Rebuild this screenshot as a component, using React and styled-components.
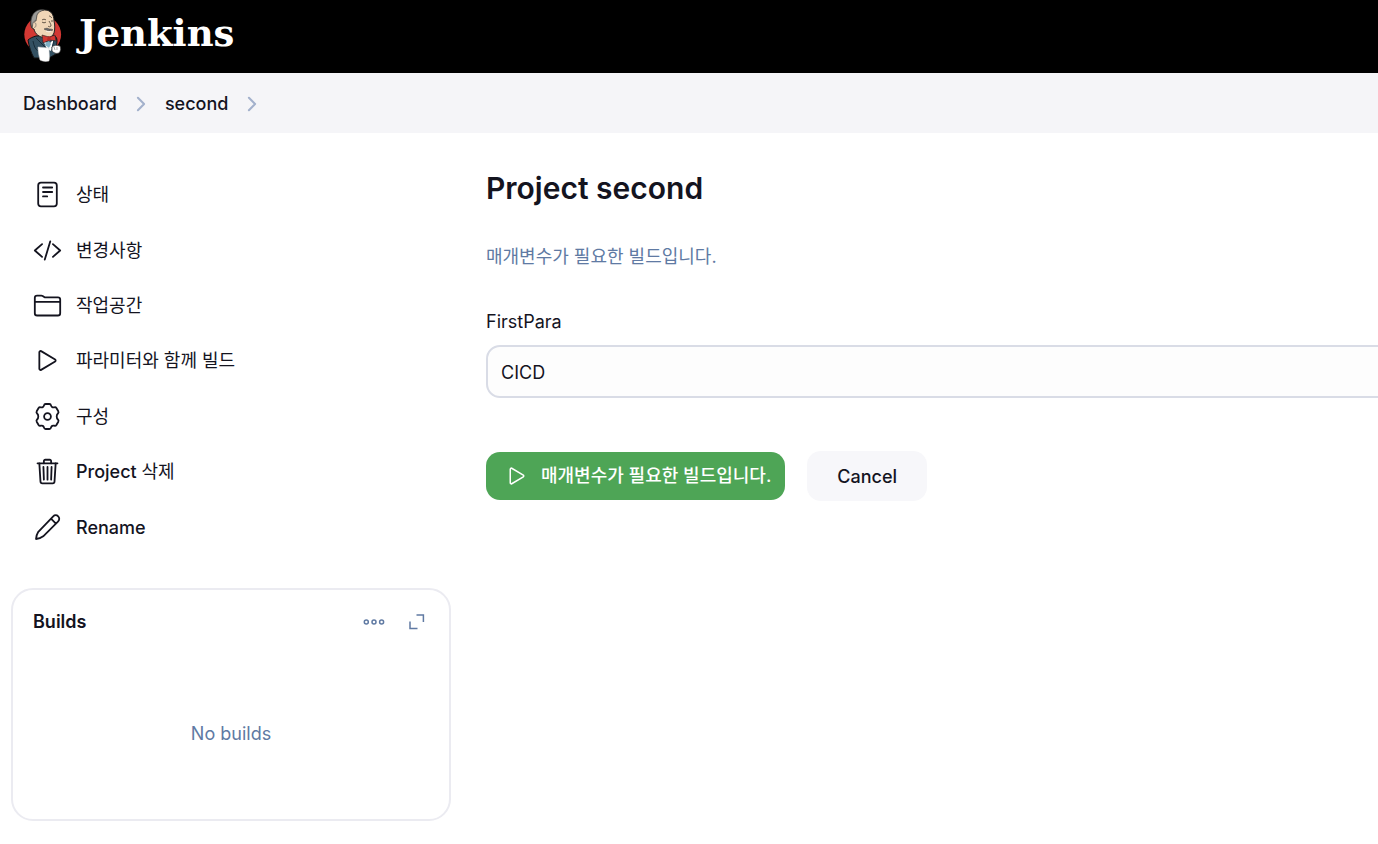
import styled, { createGlobalStyle } from "styled-components";
import {
  IoChevronForwardOutline,
  IoCodeSlashOutline,
  IoFolderOutline,
  IoPlayOutline,
  IoTrashOutline,
} from "react-icons/io5";

const GlobalStyle = createGlobalStyle`
  * {
    box-sizing: border-box;
  }

  body {
    margin: 0;
    overflow-x: hidden;
    background: #fff;
    color: #14141f;
    font-family: Inter, "Noto Sans CJK KR", sans-serif;
    font-size: 18px;
    line-height: 24px;
  }

  a {
    color: inherit;
    text-decoration: none;
  }

  button, input {
    font: inherit;
    color: inherit;
  }
`;

const Header = styled.header`
  display: flex;
  align-items: center;
  height: 73px;
  padding: 0 15px 2px;
  background: #000;
`;

const Brand = styled.a`
  display: flex;
  align-items: center;
  gap: 4px;
  color: #fff;
`;

const BrandName = styled.span`
  padding-bottom: 6px;
  font-family: "DejaVu Serif", serif;
  font-size: 37px;
  font-weight: bold;
  line-height: 60px;
`;

const Breadcrumbs = styled.nav`
  display: flex;
  align-items: center;
  gap: 13px;
  height: 60px;
  padding: 1px 23px 0;
  background: #f5f5f8;
  font-weight: 500;

  svg {
    color: #a3b1cc;
  }
`;

const Page = styled.div`
  display: grid;
  grid-template-columns: 440px minmax(0, 1fr);
  gap: 35px;
  padding: 34px 0 20px 11px;
`;

const Tasks = styled.nav`
  display: grid;
  grid-auto-rows: 1fr;
  min-height: 388px;
  margin-bottom: 33px;
  padding-left: 22px;
`;

const Task = styled.a`
  display: flex;
  align-items: center;
  gap: 14px;
  font-weight: ${({ $latin }) => ($latin ? 500 : 400)};
`;

const TaskLabel = styled.span`
  padding-top: 1px;
`;

const Hangul = styled.span`
  font-weight: 400;
`;

const Card = styled.section`
  display: flex;
  flex-direction: column;
  min-height: 233px;
  border: 2px solid #ebebf1;
  border-radius: 22px;
`;

const CardHeader = styled.div`
  display: flex;
  align-items: center;
  gap: 24px;
  padding: 20px 24px 18px 20px;
`;

const CardTitle = styled.h2`
  flex-grow: 1;
  margin: 0;
  font-size: 18px;
  font-weight: 600;
  line-height: 24px;
`;

const IconButton = styled.button`
  display: flex;
  padding: 0;
  border: 0;
  background: none;
  color: #607aa3;
`;

const Empty = styled.p`
  display: flex;
  flex-grow: 1;
  align-items: center;
  justify-content: center;
  margin: 0;
  padding-bottom: 4px;
  color: #607aa3;
`;

const Title = styled.h1`
  margin: 0;
  font-size: 30px;
  font-weight: 600;
  line-height: 42px;
`;

const Description = styled.p`
  margin: 36px 0 0;
  color: #607aa3;
`;

const Label = styled.label`
  display: block;
  margin: 41px 0 11px;
`;

/* The field runs past the right edge of the window */
const Field = styled.div`
  margin-right: -24px;
`;

const Input = styled.input`
  display: block;
  width: 100%;
  height: 53px;
  padding: 2px 13px 0;
  border: 2px solid #d9dce6;
  border-radius: 14px;
  background: #fdfdfd;
`;

const Actions = styled.div`
  display: flex;
  align-items: center;
  gap: 22px;
  margin-top: 53px;
`;

const Button = styled.button`
  height: 50px;
  padding: 2px 30px 0;
  border: 0;
  border-radius: 14px;
  background: #f7f7fa;
  font-weight: 500;
`;

const BuildButton = styled(Button)`
  display: flex;
  align-items: center;
  gap: 12px;
  height: 48px;
  padding: 0 14px 0 19px;
  background: #4ea556;
  color: #fff;
`;

function JenkinsLogo() {
  return (
    <svg width="60" height="66" viewBox="0 0 60 66" aria-hidden="true">
      <ellipse cx="27.7" cy="31.5" rx="18.4" ry="18.4" fill="#d33833" />
      <path d="M13 37c2-2 5-3 8-4l17-1c3 1 4 3 4 6l-1 13-7 4H19c-3-5-5-12-6-18z" fill="#335061" stroke="#111" strokeWidth="1" />
      <path d="M18 12c2-4 7-6 12-5 6 0 9 5 9 11 1 4 1 8 0 12-2 4-5 6-9 5-6-1-10-4-11-9-2 0-3-2-3-5 0-4 0-7 2-9z" fill="#f0d6b7" stroke="#222" strokeWidth="1" />
      <path d="M17 25c-2-5-1-11 2-15 3-3 6-4 10-3-3 1-6 2-7 5 0 2-1 4-1 6-2 0-3 1-3 3z" fill="#9b9b98" stroke="#333" strokeWidth=".7" />
      <path d="M18 20c2-1 3 0 3 2s-1 3-2 2" fill="#f0d6b7" stroke="#555" strokeWidth=".6" />
      <path d="M27 17c1-1 3-1 4 0M34 13c1 0 2 1 3 2M34 18c1 2 2 3 2 5-1 1-2 1-3 0M27 19c1 1 3 1 4 0M36 18h2" fill="none" stroke="#40362c" strokeWidth=".8" />
      <path d="M29 26c2-1 4-1 5 0 2 0 3 0 4 1-2 1-6 1-9-1z" fill="#6d6b6d" stroke="#333" strokeWidth=".5" />
      <path d="M31 28c2 1 4 1 5 0" stroke="#fff" strokeWidth=".7" fill="none" />
      <path d="M27 35l6 7 6-6-3 12-4-2z" fill="#fff" />
      <path d="M31 39l3-1 2 3-2 4-4-3z" fill="#81b0c4" />
      <path d="M27 32l7 2 6-2 1 6-6-1-7 3z" fill="#d33833" stroke="#222" strokeWidth=".6" />
      <path d="M33 33l3 1-1 4-3-1z" fill="#b62b28" />
      <path d="M18 38c1 5 2 8 5 10M21 35l10 10M39 37l-2 8" stroke="#172b38" strokeWidth="1" fill="none" />
      <path d="M23 44l11 1c0 5 1 9 0 13-4 1-7 0-9-1-1-4-2-8-2-13z" fill="#fff" stroke="#ccc" strokeWidth=".5" />
      <path d="M37 44c2-2 5-2 8-1 1 2 1 5-1 7-3 1-5 0-7-2z" fill="#fff" stroke="#333" strokeWidth=".7" />
      <path d="M39 44l1 3M42 44v3" stroke="#888" strokeWidth=".7" />
    </svg>
  );
}

function StatusIcon() {
  return (
    <svg width="29" height="29" viewBox="0 0 29 29" fill="none" stroke="currentColor" strokeWidth="1.8" strokeLinecap="round">
      <rect x="5.2" y="2.6" width="18.6" height="23.8" rx="2.8" />
      <path d="M10 7.5h9.2M10 12h9.2M10 16.4h4.2" />
    </svg>
  );
}

function GearIcon() {
  return (
    <svg width="29" height="29" viewBox="0 0 29 29" fill="none" stroke="currentColor" strokeWidth="1.8" strokeLinejoin="round">
      <circle cx="14.5" cy="14.5" r="3.4" />
      <path d="M12.6 2h3.8C17.3 2 17.8 2.500 18 3.400C18.300 4.900 19.800 5.800 21.300 5.300C22.100 5 22.900 5.200 23.400 6L25.300 9.300C25.700 10.100 25.600 10.900 24.900 11.500C23.300 12.900 23.300 16.100 24.900 17.500C25.600 18.100 25.700 18.900 25.300 19.700L23.400 23C22.900 23.800 22.100 24 21.300 23.700C19.800 23.200 18.300 24.100 18 25.600C17.800 26.500 17.300 27 16.400 27H12.600C11.700 27 11.200 26.500 11 25.600C10.700 24.100 9.200 23.200 7.700 23.700C6.900 24 6.100 23.800 5.600 23L3.700 19.700C3.300 18.900 3.400 18.100 4.100 17.500C5.700 16.100 5.700 12.900 4.100 11.500C3.400 10.900 3.300 10.100 3.700 9.300L5.600 6C6.100 5.200 6.900 5 7.700 5.300C9.200 5.800 10.700 4.900 11 3.400C11.200 2.500 11.700 2 12.600 2z" />
    </svg>
  );
}

function PencilIcon() {
  return (
    <svg width="29" height="29" viewBox="0 0 29 29" fill="none" stroke="currentColor" strokeWidth="1.8" strokeLinecap="round" strokeLinejoin="round">
      <path d="M3 26c.2-2.6.9-5 2.3-7.2L20.2 3.300a3.500 3.500 0 0 1 5 5L10.200 23.300C8 25 5.600 25.800 3 26zM18 5.700l4.900 4.900" />
    </svg>
  );
}

function DotsIcon() {
  return (
    <svg width="22" height="16" viewBox="0 0 22 16" fill="none" stroke="currentColor" strokeWidth="1.5">
      <circle cx="3.3" cy="8" r="2" />
      <circle cx="11" cy="8" r="2" />
      <circle cx="18.6" cy="8" r="2" />
    </svg>
  );
}

function ExpandIcon() {
  return (
    <svg width="16" height="16" viewBox="0 0 16 16" fill="none" stroke="currentColor" strokeWidth="1.5">
      <path d="M7.500 1h6.900v7M1 7.500v7h7.500" />
    </svg>
  );
}

const tasks = [
  { id: "status", label: "상태", icon: <StatusIcon /> },
  { id: "changes", label: "변경사항", icon: <IoCodeSlashOutline size={29} /> },
  { id: "workspace", label: "작업공간", icon: <IoFolderOutline size={29} /> },
  { id: "build", label: "파라미터와 함께 빌드", icon: <IoPlayOutline size={29} /> },
  { id: "configure", label: "구성", icon: <GearIcon /> },
  {
    id: "delete",
    label: (
      <>
        Project <Hangul>삭제</Hangul>
      </>
    ),
    icon: <IoTrashOutline size={29} />,
    latin: true,
  },
  { id: "rename", label: "Rename", icon: <PencilIcon />, latin: true },
];

export default function App() {
  return (
    <>
      <GlobalStyle />
      <Header>
        <Brand href="#">
          <JenkinsLogo />
          <BrandName>Jenkins</BrandName>
        </Brand>
      </Header>
      <Breadcrumbs aria-label="Breadcrumb">
        <a href="#">Dashboard</a>
        <IoChevronForwardOutline size={22} />
        <a href="#">second</a>
        <IoChevronForwardOutline size={22} />
      </Breadcrumbs>
      <Page>
        <aside>
          <Tasks>
            {tasks.map((task) => (
              <Task key={task.id} href="#" $latin={task.latin}>
                {task.icon}
                <TaskLabel>{task.label}</TaskLabel>
              </Task>
            ))}
          </Tasks>
          <Card>
            <CardHeader>
              <CardTitle>Builds</CardTitle>
              <IconButton type="button" aria-label="More actions">
                <DotsIcon />
              </IconButton>
              <IconButton type="button" aria-label="Expand">
                <ExpandIcon />
              </IconButton>
            </CardHeader>
            <Empty>No builds</Empty>
          </Card>
        </aside>
        <main>
          <Title>Project second</Title>
          <Description>매개변수가 필요한 빌드입니다.</Description>
          <Field>
            <Label htmlFor="first-para">FirstPara</Label>
            <Input id="first-para" type="text" defaultValue="CICD" />
          </Field>
          <Actions>
            <BuildButton type="submit">
              <IoPlayOutline size={24} />
              매개변수가 필요한 빌드입니다.
            </BuildButton>
            <Button type="button">Cancel</Button>
          </Actions>
        </main>
      </Page>
    </>
  );
}
